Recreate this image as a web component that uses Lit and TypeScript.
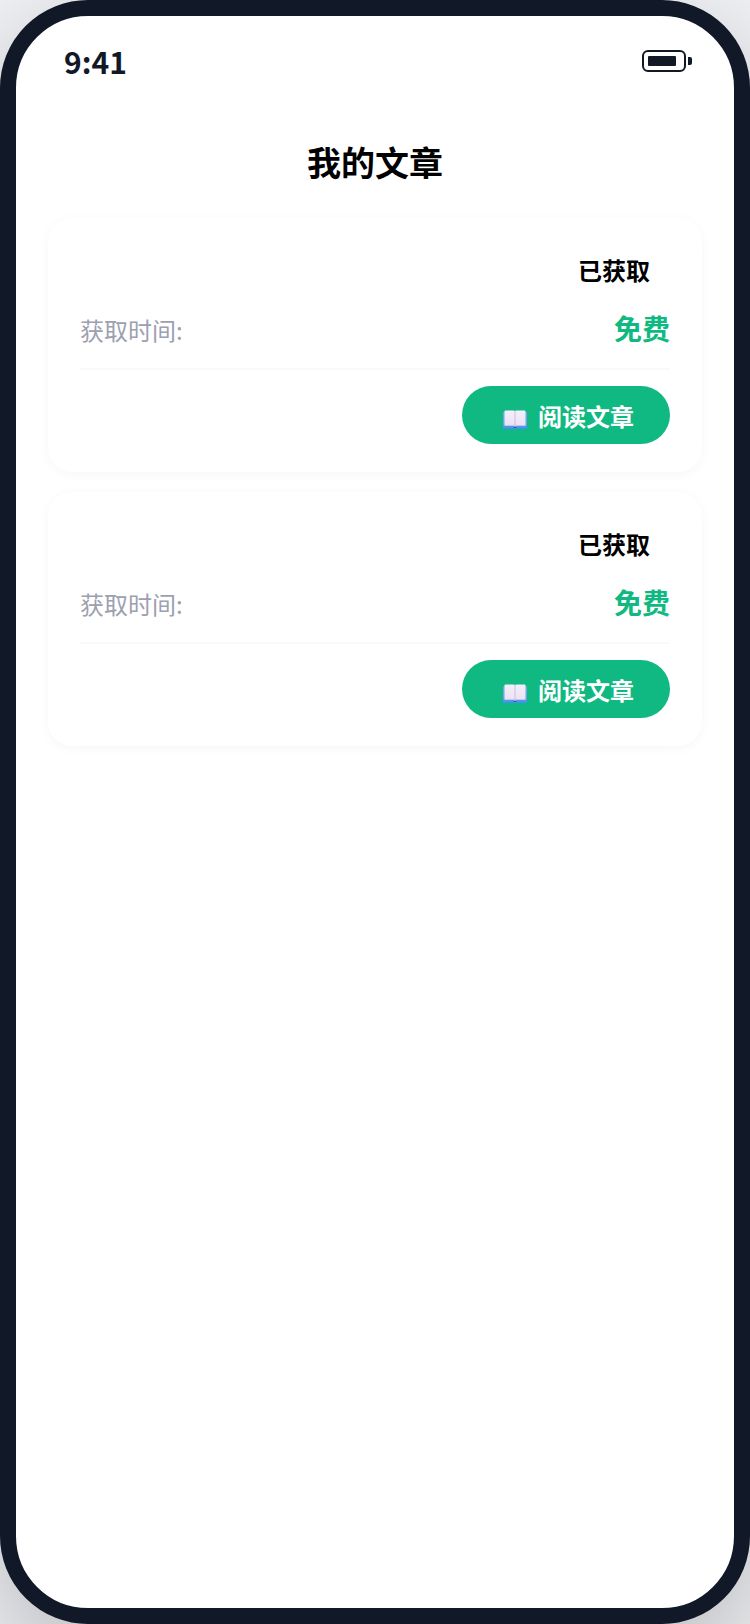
import { LitElement, html, css, svg } from "lit";
import { customElement, property, state } from "lit/decorators.js";

interface Article {
  time: string;
  price: string;
}

const bookIcon = svg`
  <defs>
    <linearGradient id="cover" x1="0" y1="0" x2="0" y2="1">
      <stop offset="0" stop-color="#7fa6d6" />
      <stop offset="0.7" stop-color="#62a4ee" />
      <stop offset="1" stop-color="#3d8fea" />
    </linearGradient>
    <linearGradient id="page" x1="0" y1="0" x2="0" y2="1">
      <stop offset="0" stop-color="#f3effa" />
      <stop offset="1" stop-color="#ebe3f5" />
    </linearGradient>
  </defs>
  <rect x="0" y="2" width="24" height="17" rx="1" fill="url(#cover)" />
  <path d="M1.500 15h21v1h-9L12 17l-1.500-1h-9z" fill="#b9a3d6" />
  <path d="M1.500 1.500Q1.500 .5 2.500 .5h8Q12 .5 12 1.500V15.500H1.500z" fill="url(#page)" />
  <path d="M22.500 1.500Q22.500 .5 21.500 .5h-8Q12 .5 12 1.500V15.500h10.500z" fill="url(#page)" />
  <path d="M11.500 1.500h1V15.500h-1z" fill="#cbc0de" />
  <path d="M10.500 17h3v1h-3z" fill="#2361a8" />
`;

@customElement("status-bar")
class StatusBar extends LitElement {
  static styles = css`
    :host {
      display: flex;
      align-items: center;
      justify-content: space-between;
      box-sizing: border-box;
      height: 88px;
      padding: 2px 42px 0 48px;
      color: #111827;
    }
    .time {
      font-size: 30px;
      line-height: 44px;
      font-weight: 600;
    }
    .battery {
      display: flex;
      align-items: center;
      gap: 2px;
    }
    .shell {
      box-sizing: border-box;
      width: 44px;
      height: 22px;
      padding: 4px;
      border: 2px solid #111827;
      border-radius: 6px;
    }
    .level {
      width: 28px;
      height: 10px;
      border-radius: 1px;
      background: #111827;
    }
    .cap {
      width: 4px;
      height: 8px;
      border-radius: 0 2px 2px 0;
      background: #111827;
    }
  `;

  render() {
    return html`
      <span class="time">9:41</span>
      <div class="battery">
        <div class="shell"><div class="level"></div></div>
        <div class="cap"></div>
      </div>
    `;
  }
}

@customElement("article-card")
class ArticleCard extends LitElement {
  @property({ attribute: false }) article: Article = { time: "", price: "" };

  static styles = css`
    :host {
      display: block;
      padding: 28px 32px;
      border-radius: 24px;
      background: #fff;
      box-shadow: 0 2px 12px rgba(0, 0, 0, 0.04);
    }
    .head {
      display: flex;
      justify-content: flex-end;
    }
    .status {
      padding: 8px 20px;
      font-size: 24px;
      line-height: 32px;
      font-weight: 600;
      color: #000;
    }
    .info {
      display: flex;
      align-items: baseline;
      justify-content: space-between;
      padding: 12px 0 18px;
      border-bottom: 2px solid #f9fafb;
    }
    .time {
      font-size: 24px;
      line-height: 36px;
      color: #9ca0b0;
    }
    .price {
      font-size: 28px;
      line-height: 44px;
      font-weight: 700;
      color: #10b981;
    }
    .actions {
      display: flex;
      justify-content: flex-end;
      padding-top: 16px;
    }
    .read {
      display: flex;
      align-items: center;
      gap: 11px;
      height: 58px;
      padding: 2px 36px 0 41px;
      border: 0;
      border-radius: 29px;
      background: #10b981;
      color: #fff;
      font: inherit;
      font-size: 24px;
      line-height: 36px;
      font-weight: 700;
    }
    .icon {
      display: block;
      width: 24px;
      height: 19px;
      padding-top: 6px;
    }
  `;

  render() {
    return html`
      <div class="head"><span class="status">已获取</span></div>
      <div class="info">
        <span class="time">获取时间:${this.article.time}</span>
        <span class="price">${this.article.price}</span>
      </div>
      <div class="actions">
        <button class="read" type="button">
          <svg class="icon" viewBox="0 0 24 19" aria-hidden="true">${bookIcon}</svg>
          阅读文章
        </button>
      </div>
    `;
  }
}

@customElement("app-root")
class AppRoot extends LitElement {
  @state() private articles: Article[] = [
    { time: "", price: "免费" },
    { time: "", price: "免费" },
  ];

  static styles = css`
    :host {
      display: flex;
      min-height: 100vh;
      overflow: hidden;
      background: #f1f2f5;
      font-family: "Noto Sans CJK SC", sans-serif;
    }
    .phone {
      flex: 1;
      box-sizing: border-box;
      border: 16px solid #111827;
      border-radius: 88px;
      background: #fff;
      box-shadow: 0 40px 120px rgba(0, 0, 0, 0.25);
    }
    .title {
      margin: 0;
      padding: 32px 0 30px;
      font-size: 34px;
      line-height: 52px;
      font-weight: 600;
      text-align: center;
      color: #000;
    }
    .list {
      display: flex;
      flex-direction: column;
      gap: 20px;
      padding: 0 32px;
    }
  `;

  render() {
    return html`
      <main class="phone">
        <status-bar></status-bar>
        <h1 class="title">我的文章</h1>
        <div class="list">
          ${this.articles.map((a) => html`<article-card .article=${a}></article-card>`)}
        </div>
      </main>
    `;
  }
}
